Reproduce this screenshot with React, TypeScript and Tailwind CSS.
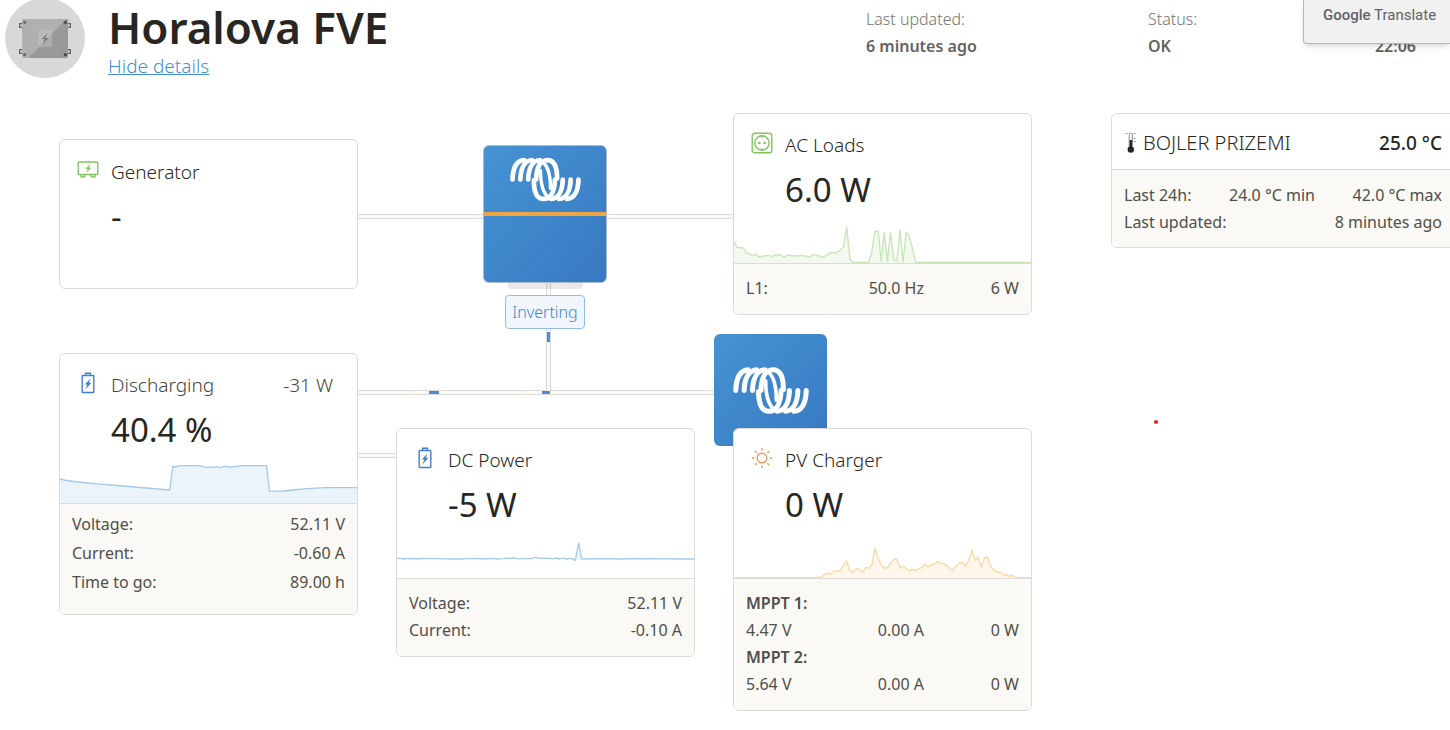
import type { ReactNode } from "react";

function VictronMark({ className }: { className: string }) {
  return (
    <svg viewBox="15 21 226 140" className={className} fill="none" stroke="#fff" strokeWidth="15" strokeLinecap="round" aria-hidden="true">
      <path d="M23 91C24 56 35 31 60 29" />
      <path d="M48 91C49 56 61 31 85 29" />
      <path d="M73 91C74 56 86 31 110 29" />
      <path d="M98 91C99 56 110 29 134 29C157 29 165 56 165 88" />
      <path d="M233 91C232 126 221 151 196 153" />
      <path d="M208 91C207 126 195 151 171 153" />
      <path d="M183 91C182 126 170 151 146 153" />
      <path d="M158 91C157 126 146 153 122 153C99 153 91 126 91 94" />
      <path d="M112 62C112 98 120 134 138 148" strokeWidth="11" />
      <path d="M144 120C144 84 136 48 118 34" strokeWidth="11" />
    </svg>
  );
}

function GeneratorIcon() {
  return (
    <svg viewBox="0 0 22 22" className="size-[22px]" fill="none" stroke="#82c45f" strokeWidth="1.4" aria-hidden="true">
      <rect x="1.2" y="3" width="19.6" height="12.5" rx="1" />
      <path d="M4 15.5v2.3h3.6v-2.3M14.4 15.5v2.3H18v-2.3" />
      <path d="M13.8 4.6 8.4 10h2.4l-1.6 4 5-5.2h-2.4z" fill="#82c45f" stroke="none" />
    </svg>
  );
}

function SocketIcon() {
  return (
    <svg viewBox="0 0 22 22" className="size-[22px]" fill="none" stroke="#82c45f" strokeWidth="1.4" aria-hidden="true">
      <rect x="1.2" y="1.2" width="19.6" height="19.6" rx="2.6" />
      <circle cx="11" cy="11" r="7.2" />
      <path d="M11 3.8v2M11 16.2v2" />
      <circle cx="8.3" cy="11" r="1.3" fill="#82c45f" stroke="none" />
      <circle cx="13.7" cy="11" r="1.3" fill="#82c45f" stroke="none" />
    </svg>
  );
}

function BatteryIcon() {
  return (
    <svg viewBox="0 0 22 22" className="size-[22px]" fill="none" stroke="#3f7fce" strokeWidth="1.4" aria-hidden="true">
      <rect x="5.2" y="3.5" width="11.6" height="17" rx="0.5" />
      <path d="M8.6 3.5V1.3h4.8v2.2" />
      <path d="M13.8 6.2 7.8 12.6h2.6L8.2 17.8l6.2-7h-2.6z" fill="#3f7fce" stroke="none" />
    </svg>
  );
}

function SunIcon() {
  return (
    <svg viewBox="0 0 22 22" className="size-[22px]" fill="none" stroke="#f0975a" strokeWidth="1.5" aria-hidden="true">
      <circle cx="11" cy="11" r="4.8" />
      <path d="M11 1v2.4M11 18.6V21M.8 11h2.4M18.8 11h2.4M4 4l1.7 1.7M16.3 16.3 18 18M4 18l1.7-1.7M16.3 5.7 18 4" />
    </svg>
  );
}

function ThermometerIcon() {
  return (
    <svg viewBox="0 0 12 22" className="h-[22px] w-3" fill="none" aria-hidden="true">
      <path d="M4.2 14V2.8a1.6 1.6 0 0 1 3.2 0V14" stroke="#8a8a8a" strokeWidth="1" />
      <path d="M4.6 8h2.4v7H4.6z" fill="#272622" />
      <circle cx="5.8" cy="17.5" r="3.2" fill="#272622" />
      <path d="M.6 1.5h2M8.6 1.5h2M8.6 6.5h2.2M8.6 9.5h2.2" stroke="#999" />
    </svg>
  );
}

function InstallationAvatar() {
  return (
    <svg viewBox="0 0 240 240" className="size-20 shrink-0" aria-hidden="true">
      <circle cx="120" cy="120" r="120" fill="#d8d8d8" />
      <g fill="none" stroke="#636363" strokeWidth="4">
        <path d="M52 77h-8v11h8M188 77h8v11h-8M52 155h-8v11h8M188 155h8v11h-8" />
      </g>
      <rect x="51" y="63" width="138" height="117" rx="5" fill="#b0b0b0" />
      <path d="M186 63h-1L69 180h115q5 0 5-5V68q0-4-3-5z" fill="#999" />
      <rect x="101" y="96" width="39" height="51" fill="#bbb" />
      <path d="M140 109v38h-38z" fill="#aaa" />
      <path d="m128 106-18 17h9l-6 15 17-18h-9z" fill="#777" />
      <g fill="#6e6e6e">
        <circle cx="59" cy="73" r="5" />
        <circle cx="181" cy="73" r="5" fill="#4c4c4c" />
        <circle cx="59" cy="170" r="5" />
        <circle cx="181" cy="170" r="5" fill="#4c4c4c" />
      </g>
    </svg>
  );
}

type SparkProps = { viewBox: string; line: string; area: string; stroke: string; fill: string };

function Sparkline({ viewBox, line, area, stroke, fill }: SparkProps) {
  return (
    <svg viewBox={viewBox} preserveAspectRatio="none" className="mt-auto block h-10 w-full" aria-hidden="true">
      <path d={area} fill={fill} />
      <path d={line} fill="none" stroke={stroke} strokeWidth="4" strokeLinejoin="round" />
    </svg>
  );
}

const acLine =
  "M24 410L33 428 52 430 61 444 80 452 90 449 99 457 112 454 131 452 138 457 146 450 166 451 175 458 186 451 205 454 214 452 222 455 230 452 252 457 261 450 275 452 290 457 298 455 308 447 318 444 330 445 343 438 354 428 364 368 374 464 383 473 430 473 440 440 449 381 459 379 468 470 477 384 487 470 496 384 506 465 515 471 525 376 534 472 543 382 553 395 562 430 572 473 920 473";
const batteryLine =
  "M27 402C60 412 110 413 180 420L358 435 367 364 376 366 388 362 445 362 460 365 472 368 480 365 490 368 500 365 509 368 520 365 530 364 538 367 548 365 558 365 570 362 650 362 659 439 700 438C740 435 760 429 830 428L923 428";
const dcLine =
  "M18 536L28 536 38 538 48 536 60 538 72 536 84 538 95 536 130 537 200 538 250 536 285 538 305 536 320 538 340 537 348 535 357 537 368 534 378 537 425 537 434 533 446 535 490 537 498 535 510 538 518 535 530 538 540 536 550 538 556 542 566 490 575 538 640 537 690 538 720 537 914 538";
const pvLine =
  "M86 758L330 758 348 756 358 747 368 744 376 747 387 737 396 739 405 736 424 708 434 738 443 741 453 731 462 733 472 743 481 728 491 729 500 719 509 671 519 700 528 719 538 730 547 728 557 713 566 703 575 702 585 729 594 723 604 732 613 738 622 733 632 736 642 731 651 728 660 718 670 725 680 718 689 717 698 709 708 715 718 716 727 722 736 733 745 735 755 722 765 714 774 712 783 725 792 706 802 675 811 706 821 697 830 726 840 699 849 696 858 725 868 734 877 742 887 742 896 750 905 749 915 754 924 751 934 757 945 758 979 758";

type CardProps = { icon: ReactNode; title: string; value: string; extra?: string; spark?: ReactNode; muted?: boolean; children?: ReactNode };

function Card({ icon, title, value, extra, spark, muted, children }: CardProps) {
  return (
    <section className="relative overflow-hidden rounded-md border border-[#dcdbd8] bg-white">
      <div className={children ? "flex h-[149px] flex-col pt-[17px]" : "flex h-[148px] flex-col pt-[18px]"}>
        <div className="flex gap-3 pr-6 pl-[17px]">
          <span className="mt-px shrink-0">{icon}</span>
          <div className="min-w-0 flex-1">
            <h2 className={muted ? "flex justify-between text-[19px] leading-7 font-light text-[#45443f]" : "flex justify-between text-[19px] leading-7 font-light text-[#272622]"}>
              <span>{title}</span>
              {extra && <span>{extra}</span>}
            </h2>
            <p className="mt-[11px] text-[33px] leading-10 text-[#272622]">{value}</p>
          </div>
        </div>
        {spark}
      </div>
      {children && <div className="border-t border-[#dcdbd8] bg-[#faf9f5] px-3 text-base text-[#4f4e4a]">{children}</div>}
    </section>
  );
}

function Pairs({ rows, loose }: { rows: [string, string][]; loose?: boolean }) {
  return (
    <dl className={loose ? "pt-1.5 pb-[17px]" : "pt-[11px] pb-3"}>
      {rows.map(([label, value]) => (
        <div key={label} className={loose ? "flex justify-between leading-[29px]" : "flex justify-between leading-[27px]"}>
          <dt>{label}</dt>
          <dd>{value}</dd>
        </div>
      ))}
    </dl>
  );
}

function Readings({ rows }: { rows: string[][] }) {
  return (
    <div className="pt-[11px] pb-3">
      <table className="w-full table-fixed leading-[27px]">
        <tbody>
          {rows.map((row, i) => (
            <tr key={i}>
              {row.length === 1 ? (
                <th colSpan={3} className="p-0 text-left font-semibold">{row[0]}</th>
              ) : (
                row.map((cell, j) => (
                  <td key={j} className={j === 0 ? "p-0 text-left" : j === 1 ? "p-0 pr-1 text-right" : "p-0 text-right"}>{cell}</td>
                ))
              )}
            </tr>
          ))}
        </tbody>
      </table>
    </div>
  );
}

function Connectors() {
  return (
    <div className="absolute inset-0" aria-hidden="true">
      <div className="absolute top-[101px] left-[299px] h-[5px] w-[375px] border-y border-[#dcdbd8] bg-[#faf9f5]" />
      <div className="absolute top-[277px] left-[299px] h-[5px] w-[357px] border-y border-[#dcdbd8] bg-[#faf9f5]" />
      <div className="absolute top-[340px] left-[299px] h-[5px] w-[38px] border-y border-[#dcdbd8] bg-[#faf9f5]" />
      <div className="absolute top-[169px] left-[487px] h-[109px] w-[5px] border-x border-[#dcdbd8] bg-[#faf9f5]" />
      <div className="absolute top-[219px] left-[488px] h-2.5 w-[3px] bg-[#478fd1]" />
      <div className="absolute top-[278px] left-[370px] h-[3px] w-2.5 bg-[#478fd1]" />
      <div className="absolute top-[278px] left-[483px] h-[3px] w-2 bg-[#478fd1]" />
    </div>
  );
}

export default function App() {
  return (
    <div className="relative overflow-hidden bg-white pb-[19px] font-['Noto_Sans','Open_Sans',sans-serif] text-[#272622]">
      <header className="flex h-[113px] items-start">
        <div className="-mt-0.5 flex w-[866px] gap-[23px] pl-[5px]">
          <InstallationAvatar />
          <div>
            <h1 className="text-[44px] leading-[58px] font-semibold">Horalova FVE</h1>
            <a href="#details" className="block text-[19px] leading-5 font-light text-[#478fd1] underline">Hide details</a>
          </div>
        </div>
        <dl className="flex flex-1 pt-1.5 text-base leading-[27px]">
          <div className="w-[282px]">
            <dt className="font-light text-[#75746f]">Last updated:</dt>
            <dd className="font-semibold text-[#64635f]">6 minutes ago</dd>
          </div>
          <div>
            <dt className="font-light text-[#75746f]">Status:</dt>
            <dd className="font-semibold text-[#64635f]">OK</dd>
          </div>
          <div className="ml-auto pt-[27px] pr-[34px]">
            <dd className="font-semibold text-[#64635f]">22:06</dd>
          </div>
        </dl>
      </header>

      <div className="absolute top-0 right-0 z-10 h-11 w-[147px] rounded-bl-[4px] border-b border-l border-[#b5b8b5] bg-[#f1f1f1] pt-1 pl-[19px] text-[15px] leading-[22px] whitespace-nowrap text-[#5f6368] shadow-md">
        <div className="font-['Roboto',sans-serif]">
          <span className="font-medium">Google</span> Translate
        </div>
      </div>

      <main id="details" className="flex items-start pl-[59px]">
        <div className="relative grid w-[973px] shrink-0 grid-cols-3 gap-x-[38px]">
          <Connectors />
          <div className="flex flex-col gap-16 pt-[26px]">
            <Card icon={<GeneratorIcon />} title="Generator" value="-" />
            <Card
              muted
              icon={<BatteryIcon />}
              title="Discharging"
              extra="-31 W"
              value="40.4 %"
              spark={<Sparkline viewBox="27 354 896 120" line={batteryLine} area={`${batteryLine}V476H27Z`} stroke="#a5c9e8" fill="#ecf4fb" />}
            >
              <Pairs loose rows={[["Voltage:", "52.11 V"], ["Current:", "-0.60 A"], ["Time to go:", "89.00 h"]]} />
            </Card>
          </div>

          <div className="flex flex-col pt-8">
            <div className="relative mr-[88px] ml-[87px] flex flex-col items-center">
              <div className="w-full overflow-hidden rounded-md border border-[#a9bccb] bg-linear-to-br from-[#4693d3] to-[#3879c2]">
                <div className="flex h-[66px] items-start justify-center pt-[11px]">
                  <VictronMark className="h-[45px] w-[71px]" />
                </div>
                <div className="h-1 bg-[#f0a63e]" />
                <div className="h-[66px]" />
              </div>
              <div className="h-1.5 w-[75px] rounded-b-sm bg-[#272622]/10" />
              <div className="mt-1.5 h-[34px] rounded-[4px] border border-[#93bde4] bg-[#f0f6fb] px-1.5 text-base leading-8 font-light text-[#3f86cb]">Inverting</div>
            </div>
            <div className="mt-[99px]">
              <Card
                icon={<BatteryIcon />}
                title="DC Power"
                value="-5 W"
                spark={<Sparkline viewBox="18 475 896 120" line={dcLine} area="M556 540L566 490 575 540Z" stroke="#a5c9e8" fill="#ecf4fb" />}
              >
                <Pairs rows={[["Voltage:", "52.11 V"], ["Current:", "-0.10 A"]]} />
              </Card>
            </div>
          </div>

          <div className="flex flex-col">
            <Card
              icon={<SocketIcon />}
              title="AC Loads"
              value="6.0 W"
              spark={<Sparkline viewBox="24 355 896 120" line={acLine} area={`${acLine}V476H24Z`} stroke="#c8e5b8" fill="#f2f9ee" />}
            >
              <Readings rows={[["L1:", "50.0 Hz", "6 W"]]} />
            </Card>
            <div className="relative mt-[19px] -mb-[18px] -ml-[19px] flex h-28 w-[113px] items-center justify-center rounded-md bg-linear-to-br from-[#4693d3] to-[#3879c2]">
              <VictronMark className="h-[47px] w-[76px]" />
            </div>
            <Card
              icon={<SunIcon />}
              title="PV Charger"
              value="0 W"
              spark={<Sparkline viewBox="84 639 896 120" line={pvLine} area={`${pvLine}V760H86Z`} stroke="#fad7a3" fill="#fff7ec" />}
            >
              <Readings rows={[["MPPT 1:"], ["4.47 V", "0.00 A", "0 W"], ["MPPT 2:"], ["5.64 V", "0.00 A", "0 W"]]} />
            </Card>
          </div>
        </div>

        <aside className="-mr-1.5 ml-[79px] flex-1 overflow-hidden rounded-md border border-[#dcdbd8]">
          <div className="flex h-[55px] items-center gap-1.5 px-[13px] pt-0.5 text-[20px] leading-7">
            <ThermometerIcon />
            <h2 className="flex-1 font-light whitespace-nowrap">BOJLER PRIZEMI</h2>
            <span className="text-[19px] font-medium">25.0 °C</span>
          </div>
          <dl className="border-t border-[#dcdbd8] bg-[#faf9f5] px-3 pt-3 pb-[11px] text-base leading-[27px] text-[#4f4e4a]">
            <div className="flex justify-between pr-px">
              <dt>Last 24h:</dt>
              <dd>24.0 °C min</dd>
              <dd>42.0 °C max</dd>
            </div>
            <div className="flex justify-between pr-px">
              <dt>Last updated:</dt>
              <dd>8 minutes ago</dd>
            </div>
          </dl>
        </aside>
      </main>
      <div className="absolute top-[420px] left-[1154px] size-1 rounded-full bg-[#ed1c24]" />
    </div>
  );
}
